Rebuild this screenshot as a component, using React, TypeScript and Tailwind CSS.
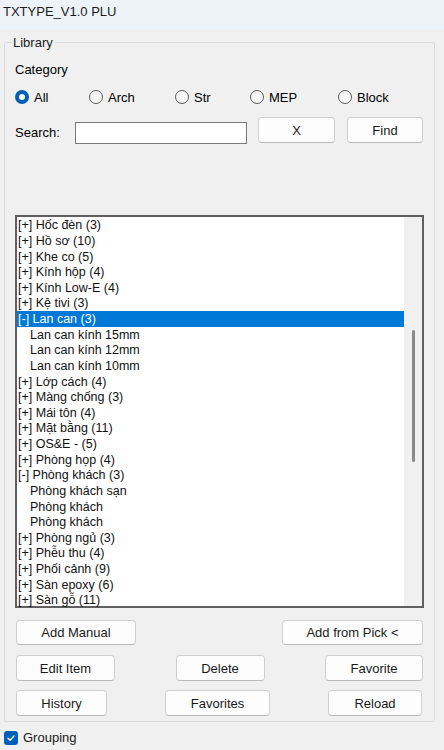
import { useState } from 'react';

type Row = { label: string; child?: boolean; open?: boolean };

const ROWS: Row[] = [
  { label: 'Hốc đèn (3)' },
  { label: 'Hồ sơ (10)' },
  { label: 'Khe co (5)' },
  { label: 'Kính hộp (4)' },
  { label: 'Kính Low-E (4)' },
  { label: 'Kệ tivi (3)' },
  { label: 'Lan can (3)', open: true },
  { label: 'Lan can kính 15mm', child: true },
  { label: 'Lan can kính 12mm', child: true },
  { label: 'Lan can kính 10mm', child: true },
  { label: 'Lớp cách (4)' },
  { label: 'Màng chống (3)' },
  { label: 'Mái tôn (4)' },
  { label: 'Mặt bằng (11)' },
  { label: 'OS&E - (5)' },
  { label: 'Phòng họp (4)' },
  { label: 'Phòng khách (3)', open: true },
  { label: 'Phòng khách sạn', child: true },
  { label: 'Phòng khách', child: true },
  { label: 'Phòng khách', child: true },
  { label: 'Phòng ngủ (3)' },
  { label: 'Phễu thu (4)' },
  { label: 'Phối cảnh (9)' },
  { label: 'Sàn epoxy (6)' },
  { label: 'Sàn gỗ (11)' },
];

const CATEGORIES = [
  { name: 'All', w: 'w-[74px]' },
  { name: 'Arch', w: 'w-[86px]' },
  { name: 'Str', w: 'w-[75px]' },
  { name: 'MEP', w: 'w-[88px]' },
  { name: 'Block', w: 'w-[80px]' },
];

function Btn({ label, className = '' }: { label: string; className?: string }) {
  return (
    <button
      className={`flex items-center justify-center rounded-[4px] border border-[#d0d0d0] border-b-[#b9b9b9] bg-[#fdfdfd] text-[13px] leading-[15px] text-[#1a1a1a] ${className}`}
    >
      {label}
    </button>
  );
}

export default function App() {
  const [cat, setCat] = useState('All');
  const selected = 6;

  return (
    <div className="h-[750px] w-[444px] overflow-hidden bg-[#f0f0f0] font-['Liberation_Sans',Arial,sans-serif] text-[13px] leading-[15px] text-black">
      <div className="h-[30px] bg-[#eef3f9] pl-[3px] pt-[4px] text-[13px] leading-[15px] text-[#1b1b1b]">
        TXTYPE_V1.0 PLU
      </div>

      <fieldset className="ml-[4px] mt-[5px] w-[431px] rounded-[2px] border border-[#dadada] pb-[5px]">
        <legend className="ml-[7px] px-[1px] leading-[15px] text-[#1b1b1b]">Library</legend>

        <div className="mt-[12px] pl-[10px]">Category</div>

        <div className="mt-[13px] flex h-[14px] items-center pl-[10px]">
          {CATEGORIES.map((c) => (
            <label key={c.name} className={`flex items-center gap-[5px] ${c.w}`} onClick={() => setCat(c.name)}>
              {cat === c.name ? (
                <span className="flex h-[14px] w-[14px] items-center justify-center rounded-full bg-[#005fb8]">
                  <span className="h-[6px] w-[6px] rounded-full bg-white" />
                </span>
              ) : (
                <span className="h-[14px] w-[14px] rounded-full border border-[#5c5c5c] bg-[#f6f6f6]" />
              )}
              <span>{c.name}</span>
            </label>
          ))}
        </div>

        <div className="mt-[13px] flex items-start pl-[10px]">
          <span className="mt-[8px] w-[60px]">Search:</span>
          <div className="mt-[5px] h-[22px] w-[172px] border border-[#7a7a7a] bg-white" />
          <Btn label="X" className="ml-[11px] h-[26px] w-[77px]" />
          <Btn label="Find" className="ml-[12px] h-[26px] w-[76px]" />
        </div>

        <div className="ml-[10px] mt-[71px] flex h-[393px] w-[409px] border-2 border-[#5f5f5f] bg-white">
          <div className="flex w-[387px] flex-col pt-[0.5px] text-[12.5px]">
            {ROWS.map((r, i) => (
              <div
                key={i}
                className={`flex h-[15.625px] items-center whitespace-nowrap pt-[1px] leading-[15px] ${
                  i === selected ? 'bg-[#0078d7] text-white' : 'text-[#111]'
                } ${r.child ? 'pl-[13px]' : 'pl-[1px]'}`}
              >
                {r.child ? r.label : `${r.open ? '[-]' : '[+]'} ${r.label}`}
              </div>
            ))}
          </div>
          <div className="flex-1 bg-[#f0f0f0]">
            <div className="ml-[8px] mt-[113px] h-[132px] w-[3px] rounded-full bg-[#8a8a8a]" />
          </div>
        </div>

        <div className="mt-[12px] flex justify-between pl-[11px] pr-[11px]">
          <Btn label="Add Manual" className="h-[25px] w-[120px]" />
          <Btn label="Add from Pick <" className="h-[25px] w-[141px]" />
        </div>
        <div className="mt-[10px] flex justify-between pl-[11px] pr-[11px]">
          <Btn label="Edit Item" className="h-[26px] w-[99px]" />
          <Btn label="Delete" className="h-[26px] w-[89px]" />
          <Btn label="Favorite" className="h-[26px] w-[98px]" />
        </div>
        <div className="mt-[9px] flex justify-between pl-[11px] pr-[12px]">
          <Btn label="History" className="h-[26px] w-[91px]" />
          <Btn label="Favorites" className="h-[26px] w-[105px]" />
          <Btn label="Reload" className="h-[26px] w-[94px]" />
        </div>
      </fieldset>

      <div className="ml-[4px] mt-[8px] flex items-center gap-[5px]">
        <span className="flex h-[14px] w-[14px] items-center justify-center rounded-[3px] bg-[#005fb8]">
          <svg width="10" height="10" viewBox="0 0 10 10" fill="none">
            <path d="M2 5.2 L4.1 7.2 L8 3" stroke="white" strokeWidth="1.3" strokeLinecap="round" strokeLinejoin="round" />
          </svg>
        </span>
        <span className="text-[#1b1b1b]">Grouping</span>
      </div>
    </div>
  );
}
